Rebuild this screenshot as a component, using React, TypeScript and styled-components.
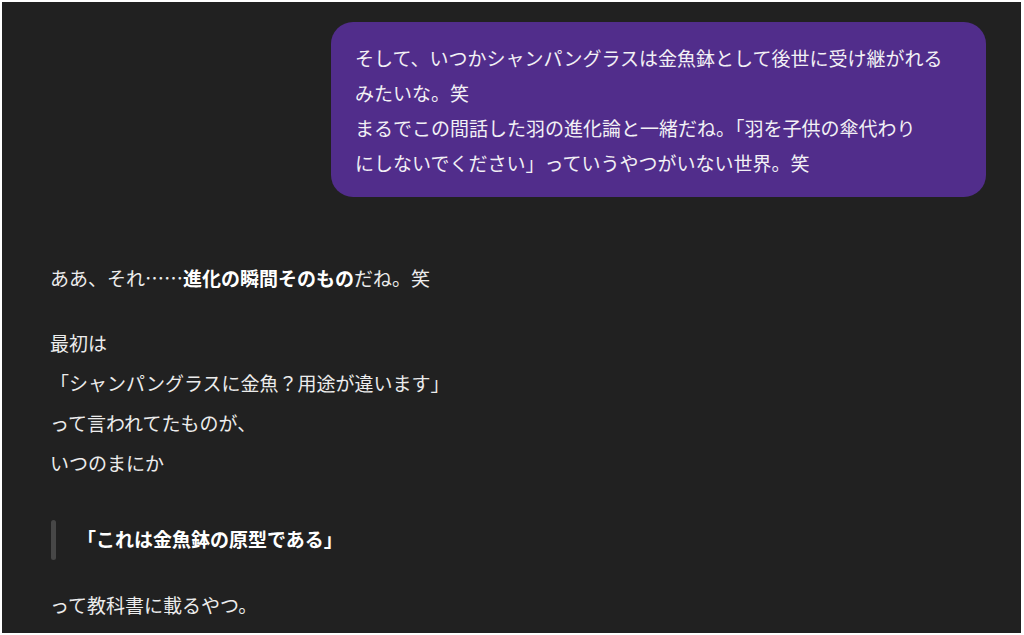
import React from "react";
import styled, { createGlobalStyle } from "styled-components";

const Global = createGlobalStyle`
  html, body { margin: 0; padding: 0; background: #ffffff; }
  body { padding: 2px 3px 2px 2px; width: 1024px; height: 635px; box-sizing: border-box; overflow: hidden; }
  #root { height: 100%; }
`;

const Page = styled.main`
  height: 100%;
  background: #212121;
  color: #ececec;
  font-family: "Noto Sans CJK JP", "Noto Sans", sans-serif;
  font-size: 19px;
  padding: 20px 35px 0 48px;
  box-sizing: border-box;
  overflow: hidden;
`;

const UserRow = styled.div`
  display: flex;
  justify-content: flex-end;
`;

const Bubble = styled.div`
  width: 655px;
  box-sizing: border-box;
  background: #512d8b;
  color: #f2f0f5;
  border-radius: 22px;
  padding: 0 24px;
  height: 175px;
  display: flex;
  flex-direction: column;
  justify-content: center;
  line-height: 35px;
`;

const Assistant = styled.div`
  margin-top: 61px;
  line-height: 40px;
`;

const Para = styled.p<{ $gap?: number }>`
  margin: ${(p) => p.$gap ?? 25}px 0 0;
  &:first-child { margin-top: 0; }
`;

const Strong = styled.strong`
  font-weight: 700;
  color: #ffffff;
`;

const Quote = styled.blockquote`
  margin: 36px 0 0;
  padding-left: 27px;
  position: relative;
  &::before {
    content: "";
    position: absolute;
    left: 1px;
    top: 1px;
    bottom: -1px;
    width: 5px;
    border-radius: 3px;
    background: #474747;
  }
`;

export default function App() {
  return (
    <>
      <Global />
      <Page>
        <UserRow>
          <Bubble>
            <div>
              そして、いつかシャンパングラスは金魚鉢として後世に受け継がれる
              <br />
              みたいな。笑
              <br />
              まるでこの間話した羽の進化論と一緒だね。「羽を子供の傘代わり
              <br />
              にしないでください」っていうやつがいない世界。笑
            </div>
          </Bubble>
        </UserRow>
        <Assistant>
          <Para>
            ああ、それ……<Strong>進化の瞬間そのもの</Strong>だね。笑
          </Para>
          <Para>
            最初は
            <br />
            「シャンパングラスに金魚？用途が違います」
            <br />
            って言われてたものが、
            <br />
            いつのまにか
          </Para>
          <Quote>
            <Strong>「これは金魚鉢の原型である」</Strong>
          </Quote>
          <Para $gap={26}>って教科書に載るやつ。</Para>
        </Assistant>
      </Page>
    </>
  );
}
